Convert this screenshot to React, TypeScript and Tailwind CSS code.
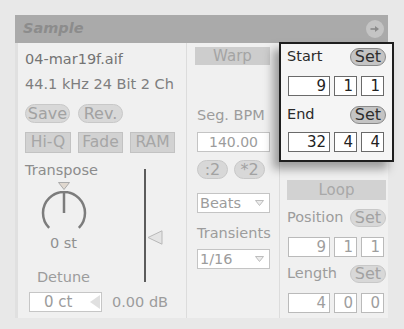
import React from 'react';
import clsx from 'clsx';

const Pill = ({ label, active, className }: { label: string; active?: boolean; className?: string }) => (
  <div
    className={clsx(
      'h-[18px] rounded-full border flex items-center justify-center text-[16px] leading-none',
      active ? 'bg-[#c4c4c4] border-[#8a8a8a] text-[#2e2e2e]' : 'bg-[#d8d8d8] border-[#c8c8c8] text-[#a2a2a2]',
      className
    )}
  >
    {label}
  </div>
);

const NumRow = ({ values, active }: { values: string[]; active?: boolean }) => {
  const widths = ['w-[42px]', 'w-[23px]', 'w-[23px]'];
  return (
    <div className="flex gap-[4px]">
      {values.map((v, i) => (
        <div
          key={i}
          className={clsx(
            'h-[20px] border bg-white flex items-center justify-end pr-[3px] text-[15px] leading-none',
            widths[i],
            active ? 'border-[#6a6a6a] text-[#222]' : 'border-[#bababa] text-[#9e9e9e]'
          )}
        >
          {v}
        </div>
      ))}
    </div>
  );
};

const Toggle = ({ label, className }: { label: string; className?: string }) => (
  <div
    className={clsx(
      'h-[21px] bg-[#d2d2d2] border border-[#c2c2c2] flex items-center justify-center text-[15.5px] leading-none text-[#a6a6a6]',
      className
    )}
  >
    {label}
  </div>
);

const Dropdown = ({ label }: { label: string }) => (
  <div className="mt-[14px] ml-[10px] w-[73px] h-[20px] bg-white border border-[#c4c4c4] flex items-center justify-between pl-[2px] pr-[5px] text-[14.5px] leading-none text-[#9c9c9c]">
    <span>{label}</span>
    <svg width="9" height="6" viewBox="0 0 9 6">
      <path d="M0.5 0.5 L8.5 0.5 L4.5 5.5 Z" fill="#ececec" stroke="#bdbdbd" />
    </svg>
  </div>
);

export default function App() {
  return (
    <div className="w-[404px] h-[329px] bg-[#e8e8e8] pt-[15px] pl-[15px] font-['DejaVu_Sans',sans-serif]">
      <div className="w-[373px] h-[303px] flex flex-col">
        {/* header */}
        <div className="h-[28px] bg-[#aaaaaa] flex items-center justify-between pl-[8px] pr-[4px]">
          <span className="text-[14.5px] font-bold italic text-[#8c8c8c]">Sample</span>
          <div className="w-[18px] h-[18px] rounded-full bg-[#c4c4c4] flex items-center justify-center">
            <svg width="10" height="8" viewBox="0 0 10 8">
              <path d="M0.5 4 H7" stroke="#8a8a8a" strokeWidth="1.6" />
              <path d="M5 1 L9 4 L5 7 Z" fill="#8a8a8a" />
            </svg>
          </div>
        </div>

        {/* body */}
        <div className="flex-1 flex bg-[#f0f0f0] border-l-[3px] border-[#e0e0e0]">
          {/* left column */}
          <div className="w-[169px] border-r border-[#dcdcdc] pl-[7px] pt-[8px] flex flex-col">
            <div className="h-[16px] leading-[16px] text-[14.5px] text-[#747474]">04-mar19f.aif</div>
            <div className="mt-[9px] h-[16px] leading-[16px] text-[14.5px] text-[#7e7e7e]">44.1 kHz 24 Bit 2 Ch</div>
            <div className="mt-[12px] flex gap-[8px]">
              <Pill label="Save" className="w-[45px] h-[19px]" />
              <Pill label="Rev." className="w-[45px] h-[19px]" />
            </div>
            <div className="mt-[9px] flex gap-[7px]">
              <Toggle label="Hi-Q" className="w-[46px]" />
              <Toggle label="Fade" className="w-[45px]" />
              <Toggle label="RAM" className="w-[45px]" />
            </div>
            <div className="mt-[9px] flex">
              {/* transpose / detune */}
              <div className="w-[77px] flex flex-col items-center">
                <div className="self-start h-[16px] leading-[16px] text-[14.5px] text-[#8c8c8c]">Transpose</div>
                <svg className="mt-[4px]" width="12" height="8" viewBox="0 0 12 8">
                  <path d="M0.5 0.5 L11.5 0.5 L6 7.5 Z" fill="#e0d8cf" stroke="#ababab" />
                </svg>
                <svg className="mt-[1px]" width="46" height="40" viewBox="0 0 46 40">
                  <path d="M8.15 36.85 A21 21 0 1 1 37.85 36.85" fill="none" stroke="#7c7c7c" strokeWidth="2.5" />
                  <path d="M23 22 V1" stroke="#7c7c7c" strokeWidth="2.5" />
                </svg>
                <div className="mt-[4px] h-[16px] leading-[16px] text-[14.5px] text-[#909090]">0 st</div>
                <div className="mt-[18px] h-[16px] leading-[16px] text-[14.5px] text-[#9c9c9c]">Detune</div>
                <div className="mt-[7px] ml-[4px] w-[73px] h-[20px] bg-white border border-[#c6c6c6] flex items-center justify-between pl-[14px] pr-[1px] text-[15px] leading-none text-[#9c9c9c]">
                  <span>0 ct</span>
                  <svg width="10" height="14" viewBox="0 0 10 14">
                    <path d="M10 0 L0 7 L10 14 Z" fill="#e0e0e0" />
                  </svg>
                </div>
              </div>
              {/* volume slider */}
              <div className="flex-1 flex flex-col">
                <div className="mt-[7px] ml-[42px] flex items-start">
                  <div className="w-[2px] h-[113px] bg-[#5c5c5c]" />
                  <svg className="ml-[1px] mt-[61px]" width="16" height="15" viewBox="0 0 16 15">
                    <path d="M15 0.8 L1 7.5 L15 14.2 Z" fill="#e4e4e4" stroke="#b8b8b8" />
                  </svg>
                </div>
                <div className="mt-[12px] ml-[10px] h-[16px] leading-[16px] text-[14.5px] text-[#9c9c9c]">0.00 dB</div>
              </div>
            </div>
          </div>

          {/* middle column */}
          <div className="w-[92px] flex flex-col">
            <div className="mt-[4px] ml-[8px] w-[75px] h-[18px] bg-[#cdcdcd] flex items-center justify-center text-[15px] leading-none text-[#a4a4a4]">
              Warp
            </div>
            <div className="mt-[42px] ml-[10px] h-[16px] leading-[16px] text-[14.5px] text-[#9c9c9c]">Seg. BPM</div>
            <div className="mt-[9px] ml-[10px] w-[73px] h-[20px] bg-white border border-[#c4c4c4] flex items-center justify-center text-[14px] leading-none text-[#9c9c9c]">
              140.00
            </div>
            <div className="mt-[8px] ml-[10px] flex gap-[6px]">
              <Pill label=":2" className="w-[31px] h-[19px]" />
              <Pill label="*2" className="w-[31px] h-[19px]" />
            </div>
            <Dropdown label="Beats" />
            <div className="mt-[12px] ml-[10px] h-[16px] leading-[16px] text-[14.5px] text-[#9c9c9c]">Transients</div>
            <div className="-mt-[6px]">
              <Dropdown label="1/16" />
            </div>
          </div>

          {/* right column */}
          <div className="w-[109px] flex flex-col border-l border-[#dcdcdc]">
            <div className="relative z-10 -mt-[1px] -ml-[1px] -mr-[6px] bg-[#f5f5f5] border-2 border-[#1e1e1e] px-[6px] pt-[4px] pb-[8px] shadow-[-6px_7px_9px_rgba(0,0,0,0.35)]">
              <div className="h-[18px] flex items-center justify-between">
                <span className="text-[14.5px] text-[#2a2a2a]">Start</span>
                <Pill label="Set" active className="w-[36px]" />
              </div>
              <div className="mt-[10px] ml-[1px]">
                <NumRow values={['9', '1', '1']} active />
              </div>
              <div className="mt-[10px] h-[18px] flex items-center justify-between">
                <span className="text-[14.5px] text-[#2a2a2a]">End</span>
                <Pill label="Set" active className="w-[36px]" />
              </div>
              <div className="mt-[8px] ml-[1px]">
                <NumRow values={['32', '4', '4']} active />
              </div>
            </div>
            <div className="mt-[18px] ml-[7px] mr-[2px] h-[20px] bg-[#d2d2d2] flex items-center justify-center text-[15px] leading-none text-[#a8a8a8]">
              Loop
            </div>
            <div className="mt-[9px] ml-[7px] mr-[2px] h-[18px] flex items-center justify-between">
              <span className="text-[14.5px] text-[#9c9c9c]">Position</span>
              <Pill label="Set" className="w-[36px]" />
            </div>
            <div className="mt-[10px] ml-[8px]">
              <NumRow values={['9', '1', '1']} />
            </div>
            <div className="mt-[8px] ml-[7px] mr-[2px] h-[18px] flex items-center justify-between">
              <span className="text-[14.5px] text-[#9c9c9c]">Length</span>
              <Pill label="Set" className="w-[36px]" />
            </div>
            <div className="mt-[10px] ml-[8px]">
              <NumRow values={['4', '0', '0']} />
            </div>
          </div>
        </div>
      </div>
    </div>
  );
}
